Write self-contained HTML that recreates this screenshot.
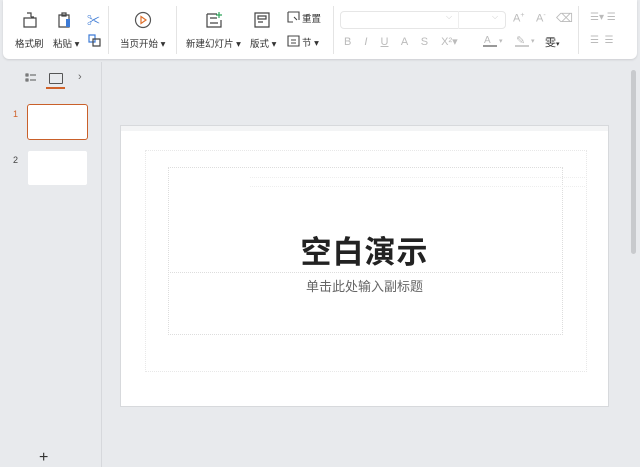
<!DOCTYPE html>
<html><head><meta charset="utf-8"><style>
body{margin:0;width:640px;height:467px;background:#e8eaed;font-family:"Liberation Sans","Noto Sans CJK SC",sans-serif;position:relative;overflow:hidden;color:#333}
.tb{position:absolute;left:3px;top:0;width:634px;height:59px;background:#fff;border-radius:0 0 6px 6px;box-shadow:0 1px 2px rgba(0,0,0,.12)}
.a{position:absolute;font-size:9.5px;color:#333;white-space:nowrap}
.sep{position:absolute;top:6px;width:1px;height:48px;background:#e4e4e4}
svg.i{position:absolute}
.ab{position:absolute}
</style></head><body>
<div class="tb"></div>
<svg class="i" style="left:21px;top:11px" width="18" height="18" viewBox="0 0 18 18" fill="none" stroke="#444" stroke-width="1.2"><path d="M6 2h4v4M3 7h12v9H3zM10 6h3"/></svg>
<div class="a" style="left:15px;top:36px">格式刷</div>
<svg class="i" style="left:55px;top:11px" width="18" height="18" viewBox="0 0 18 18" fill="none" stroke="#444" stroke-width="1.2"><path d="M4 4h10v12H4zM7 2h4v3H7z"/><rect x="11" y="8" width="4" height="8" fill="#3d7bd6" stroke="none"/></svg>
<div class="a" style="left:53px;top:36px">粘贴 ▾</div>
<div class="a" style="left:87px;top:10px;color:#3d7bd6;font-size:13px">✂</div>
<svg class="i" style="left:88px;top:34px" width="13" height="13" viewBox="0 0 13 13" fill="none" stroke="#3d7bd6" stroke-width="1.2"><path d="M1 1h6v7H1z"/><path d="M5 5h7v7H5z" stroke="#444"/></svg>
<div class="sep" style="left:108px"></div>
<svg class="i" style="left:134px;top:11px" width="18" height="18" viewBox="0 0 18 18" fill="none"><circle cx="9" cy="9" r="7.5" stroke="#555" stroke-width="1.2"/><path d="M7 5.5l5 3.5-5 3.5z" stroke="#e0702b" stroke-width="1.2"/></svg>
<div class="a" style="left:120px;top:36px">当页开始 ▾</div>
<div class="sep" style="left:176px"></div>
<svg class="i" style="left:205px;top:11px" width="18" height="18" viewBox="0 0 18 18" fill="none" stroke="#444" stroke-width="1.2"><path d="M2 3h10M2 3v13h14V9M5 7h7M5 12h8"/><path d="M14 1v6M11 4h6" stroke="#2fa35a"/></svg>
<div class="a" style="left:186px;top:36px">新建幻灯片 ▾</div>
<svg class="i" style="left:253px;top:11px" width="18" height="18" viewBox="0 0 18 18" fill="none" stroke="#444" stroke-width="1.2"><path d="M2 2h14v14H2zM5 5h8v3H5zM5 11h5"/></svg>
<div class="a" style="left:250px;top:36px">版式 ▾</div>
<svg class="i" style="left:287px;top:11px" width="13" height="13" viewBox="0 0 13 13" fill="none" stroke="#444" stroke-width="1.1"><path d="M1 1h11v8M1 1v10h5M7 6l3 3"/></svg>
<div class="a" style="left:302px;top:11px">重置</div>
<svg class="i" style="left:287px;top:35px" width="13" height="12" viewBox="0 0 13 12" fill="none" stroke="#444" stroke-width="1.1"><path d="M1 1h11v10H1zM4 5h5M4 8h5"/></svg>
<div class="a" style="left:302px;top:35px">节 ▾</div>
<div class="sep" style="left:333px"></div>
<div class="ab" style="left:340px;top:11px;width:164px;height:16px;border:1px solid #e6e6e6;border-radius:4px"></div>
<div class="ab" style="left:458px;top:11px;width:1px;height:18px;background:#eee"></div>
<div class="a" style="left:446px;top:12px;color:#ccc;font-size:8px">⌵</div>
<div class="a" style="left:492px;top:12px;color:#ccc;font-size:8px">⌵</div>
<div class="a" style="left:513px;top:12px;color:#bbb;font-size:11px">A<sup style="font-size:7px">+</sup></div>
<div class="a" style="left:536px;top:12px;color:#bbb;font-size:11px">A<sup style="font-size:7px">-</sup></div>
<div class="a" style="left:556px;top:11px;color:#bbb;font-size:12px">⌫</div>
<div class="a" style="left:344px;top:35px;color:#bbb;font-size:11px;word-spacing:10px">B <i>I</i> <u>U</u> A S X²▾</div>
<div class="ab" style="left:484px;top:35px;width:12px;height:10px;font-size:10px;color:#bbb">A</div>
<div class="ab" style="left:483px;top:45px;width:14px;height:2px;background:#999"></div>
<div class="a" style="left:499px;top:37px;color:#bbb;font-size:7px">▾</div>
<div class="a" style="left:516px;top:34px;color:#bbb;font-size:11px">✎</div>
<div class="ab" style="left:515px;top:45px;width:14px;height:2px;background:#ccc"></div>
<div class="a" style="left:531px;top:37px;color:#bbb;font-size:7px">▾</div>
<div class="a" style="left:545px;top:34px;color:#333;font-size:11px">雯<span style="font-size:7px">▾</span></div>
<div class="sep" style="left:578px"></div>
<div class="a" style="left:590px;top:12px;color:#bbb;font-size:10px">☰▾ ☰</div>
<div class="a" style="left:590px;top:35px;color:#bbb;font-size:10px">☰ &nbsp;☰</div>
<div class="ab" style="left:101px;top:62px;width:1px;height:405px;background:#d6d8dc"></div>
<svg class="i" style="left:25px;top:73px" width="12" height="10" viewBox="0 0 12 10" fill="none" stroke="#555" stroke-width="1"><path d="M1 1h2v2H1zM1 6h2v2H1zM5 2h6M5 7h6"/></svg>
<div class="ab" style="left:49px;top:73px;width:12px;height:9px;border:1px solid #555;border-radius:1px"></div>
<div class="ab" style="left:46px;top:87px;width:19px;height:2px;background:#d0622a"></div>
<div class="a" style="left:78px;top:71px;color:#666;font-size:11px">›</div>
<div class="a" style="left:13px;top:109px;color:#d0622a;font-size:9px">1</div>
<div class="ab" style="left:27px;top:104px;width:59px;height:34px;background:#fff;border:1.5px solid #c9602a;border-radius:3px"></div>
<div class="a" style="left:13px;top:155px;color:#444;font-size:9px">2</div>
<div class="ab" style="left:28px;top:151px;width:59px;height:34px;background:#fff;border-radius:2px"></div>
<div class="a" style="left:39px;top:449px;color:#333;font-size:16px">+</div>
<div class="ab" style="left:120px;top:125px;width:489px;height:282px;background:#fff;border:1px solid #d7d9dc;box-sizing:border-box"></div>
<div class="ab" style="left:121px;top:126px;width:487px;height:5px;background:#f3f4f5"></div>
<div class="ab" style="left:145px;top:150px;width:440px;height:220px;border:1px dotted #e8e8e8"></div>
<div class="ab" style="left:168px;top:167px;width:393px;height:166px;border:1px dotted #ddd"></div>
<div class="ab" style="left:168px;top:272px;width:393px;height:1px;border-top:1px dotted #ddd"></div>
<div class="ab" style="left:250px;top:177px;width:335px;height:8px;border-top:1px dotted #eee;border-bottom:1px dotted #eee"></div>
<div class="a" style="left:0;width:729px;text-align:center;top:227px;font-size:31px;font-weight:bold;color:#222;letter-spacing:1px">空白演示</div>
<div class="a" style="left:0;width:729px;text-align:center;top:276px;font-size:13px;color:#666">单击此处输入副标题</div>
<div class="ab" style="left:631px;top:70px;width:5px;height:184px;background:#c8cacd;border-radius:3px"></div>
</body></html>
